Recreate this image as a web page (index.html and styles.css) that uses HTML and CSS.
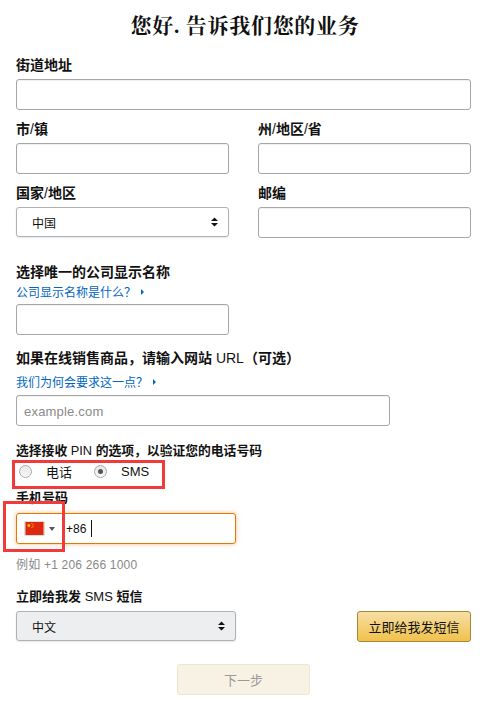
FILE: index.html
```html
<!DOCTYPE html>
<html lang="zh-CN">
<head>
  <meta charset="UTF-8">
  <title>您好，告诉我们您的业务</title>
  <link rel="stylesheet" href="styles.css">
</head>
<body>
  <h1>您好. 告诉我们您的业务</h1>

  <form class="form">
    <div class="field">
      <label>街道地址</label>
      <input class="text-input" type="text">
    </div>

    <div class="two-col">
      <div class="field">
        <label>市<span class="latin">/</span>镇</label>
        <input class="text-input" type="text">
      </div>
      <div class="field">
        <label>州<span class="latin">/</span>地区<span class="latin">/</span>省</label>
        <input class="text-input" type="text">
      </div>
      <div class="field">
        <label>国家<span class="latin">/</span>地区</label>
        <div class="fake-select fake-select-white">
          <span>中国</span>
          <svg class="updown" width="7" height="10" viewBox="0 0 7 10"><path d="M3.5 0.5L7 4H0zM3.5 9.5L0 6h7z"/></svg>
        </div>
      </div>
      <div class="field">
        <label>邮编</label>
        <input class="text-input" type="text">
      </div>
    </div>

    <div class="field section-name">
      <label>选择唯一的公司显示名称</label>
      <a class="help-link" href="#">公司显示名称是什么？<i class="arrow"></i></a>
      <input class="text-input half" type="text">
    </div>

    <div class="field section-url">
      <label>如果在线销售商品，请输入网站 <span class="latin">URL</span>（可选）</label>
      <a class="help-link help-link-tall" href="#">我们为何会要求这一点？<i class="arrow"></i></a>
      <input class="text-input wide" type="text" placeholder="example.com">
    </div>

    <div class="field section-pin">
      <label>选择接收 <span class="latin">PIN</span> 的选项，以验证您的电话号码</label>
      <div class="radios">
        <span class="radio"></span><span class="radio-text">电话</span>
        <span class="radio radio-on"></span><span class="radio-text">SMS</span>
      </div>
    </div>

    <div class="field section-phone">
      <label>手机号码</label>
      <div class="phone">
        <svg class="flag" width="21" height="15" viewBox="0 0 21 15">
          <rect width="21" height="15" fill="#de2910"/>
          <path d="M4 1.6l.6 1.7h1.8L5 4.4l.5 1.7L4 5.1 2.5 6.1 3 4.4 1.600 3.300h1.800z" fill="#ffde00"/>
          <circle cx="7.500" cy="1.800" r=".6" fill="#ffde00"/>
          <circle cx="8.800" cy="3.200" r=".6" fill="#ffde00"/>
          <circle cx="8.800" cy="5" r=".6" fill="#ffde00"/>
          <circle cx="7.500" cy="6.300" r=".6" fill="#ffde00"/>
        </svg>
        <i class="caret"></i>
        <span class="dial">+86</span>
        <i class="cursor"></i>
      </div>
      <p class="hint">例如 +1 206 266 1000</p>
    </div>

    <div class="field section-sms">
      <label>立即给我发 <span class="latin">SMS</span> 短信</label>
      <div class="sms-row">
        <div class="fake-select fake-select-grey">
          <span>中文</span>
          <svg class="updown" width="7" height="10" viewBox="0 0 7 10"><path d="M3.5 0.5L7 4H0zM3.5 9.5L0 6h7z"/></svg>
        </div>
        <button class="btn-send" type="button">立即给我发短信</button>
      </div>
    </div>

    <div class="next-row">
      <button class="btn-next" type="button" disabled>下一步</button>
    </div>
  </form>

  <!-- red boxes drawn on top of the screenshot -->
  <div class="mark mark-radios"></div>
  <div class="mark mark-flag"></div>
</body>
</html>
```

FILE: styles.css
```css
* {
  box-sizing: border-box;
}

body {
  position: relative;
  margin: 0;
  height: 703px;
  overflow: hidden;
  background-color: #fff;
  color: #111;
  font-family: "Liberation Sans", Arial, "Noto Sans CJK SC", sans-serif;
  font-size: 13px;
}

h1 {
  margin: 0;
  padding-top: 13px;
  height: 51px;
  text-align: center;
  font-family: "Liberation Serif", "Noto Serif CJK SC", "Noto Sans CJK SC", serif;
  font-size: 21px;
  line-height: 26px;
  font-weight: 700;
  letter-spacing: 0.7px;
}

.form {
  padding: 0 19px 0 16px;
}

.field label {
  display: block;
  height: 28px;
  padding-top: 6px;
  font-size: 14px;
  line-height: 17px;
  font-weight: 700;
}

.latin {
  font-weight: 400;
}

.text-input {
  display: block;
  width: 100%;
  height: 31px;
  padding: 1px 7px 0;
  border: 1px solid #a6a6a6;
  border-radius: 3px;
  background: #fff;
  font-family: inherit;
  font-size: 13px;
  letter-spacing: 0.2px;
  box-shadow: inset 0 1px 0 rgba(0, 0, 0, 0.05);
}

.text-input::placeholder {
  color: #8a8a8a;
}

.half {
  width: 213px;
}

.wide {
  width: 374px;
}

.two-col {
  display: grid;
  grid-template-columns: 213px 213px;
  column-gap: 29px;
  row-gap: 5px;
  margin-top: 5px;
}

.fake-select {
  display: flex;
  align-items: center;
  justify-content: space-between;
  height: 30px;
  padding: 0 10px 0 15px;
  border: 1px solid #adb1b8;
  border-radius: 3px;
  font-size: 12px;
  box-shadow: 0 1px 2px rgba(15, 17, 17, 0.1);
}

.fake-select-white {
  background-color: #fff;
}

.fake-select-grey {
  width: 220px;
  background-color: #eceef0;
}

.updown {
  fill: #111;
}

.section-name {
  margin-top: 20px;
}

.section-name label {
  height: 25px;
}

.help-link {
  display: block;
  height: 21px;
  padding-top: 2px;
  color: #0066c0;
  font-size: 12px;
  line-height: 17px;
  text-decoration: none;
}

.help-link-tall {
  height: 25px;
  padding-top: 5px;
}

.arrow {
  display: inline-block;
  margin-left: 5px;
  border-left: 3px solid #0066c0;
  border-top: 3px solid transparent;
  border-bottom: 3px solid transparent;
  vertical-align: 2px;
}

.section-url {
  margin-top: 9px;
}

.section-url label {
  height: 26px;
}

.section-pin {
  margin-top: 8px;
}

.section-pin label {
  height: 25px;
  padding-top: 8px;
  font-size: 12.8px;
}

.radios {
  display: flex;
  align-items: center;
  height: 24px;
  padding-left: 3px;
}

.radio {
  width: 13px;
  height: 13px;
  border: 1px solid #aaa;
  border-radius: 50%;
  background: linear-gradient(#e6e6e6, #f8f8f8);
}

.radio-on {
  display: flex;
  align-items: center;
  justify-content: center;
}

.radio-on::before {
  content: "";
  width: 5px;
  height: 5px;
  border-radius: 50%;
  background-color: #555;
}

.radio-text {
  margin-left: 14px;
  width: 48px;
  font-size: 13px;
}

.section-phone label {
  height: 30px;
  padding-top: 7px;
  font-size: 13px;
  line-height: 16px;
}

.phone {
  display: flex;
  align-items: center;
  width: 220px;
  height: 31px;
  padding-left: 7px;
  border: 1px solid #e77600;
  border-radius: 3px;
  box-shadow: 0 0 4px rgba(228, 121, 17, 0.5);
}

.flag {
  border: 1px solid #ddd;
  border-radius: 1px;
}

.caret {
  margin-left: 4px;
  border-top: 4px solid #555;
  border-left: 3px solid transparent;
  border-right: 3px solid transparent;
}

.dial {
  margin-left: 11px;
  font-size: 12px;
}

.cursor {
  width: 1px;
  height: 17px;
  margin-left: 5px;
  background-color: #111;
}

.hint {
  margin: 14px 0 0;
  color: #888;
  font-size: 12px;
  line-height: 15px;
  letter-spacing: 0.2px;
}

.section-sms {
  margin-top: 12px;
}

.section-sms label {
  height: 26px;
  padding-top: 3px;
  font-size: 13px;
}

.sms-row {
  display: flex;
  justify-content: space-between;
  align-items: flex-start;
}

.btn-send {
  width: 114px;
  height: 31px;
  padding: 0;
  border: 1px solid #a88734;
  border-radius: 3px;
  background: linear-gradient(#f7dfa5, #f0c14b);
  color: #111;
  font-family: inherit;
  font-size: 13px;
}

.next-row {
  display: flex;
  justify-content: center;
  margin-top: 22px;
}

.btn-next {
  width: 133px;
  height: 31px;
  padding: 0;
  border: 1px solid #efe6d2;
  border-radius: 3px;
  background-color: #f7f2e4;
  color: #9a9a9a;
  font-family: inherit;
  font-size: 13px;
}

/* annotation boxes */
.mark {
  position: absolute;
  border: 3px solid #f33a3a;
}

.mark-radios {
  left: 12px;
  top: 460px;
  width: 153px;
  height: 29px;
}

.mark-flag {
  left: 3px;
  top: 501px;
  width: 62px;
  height: 51px;
}
```
